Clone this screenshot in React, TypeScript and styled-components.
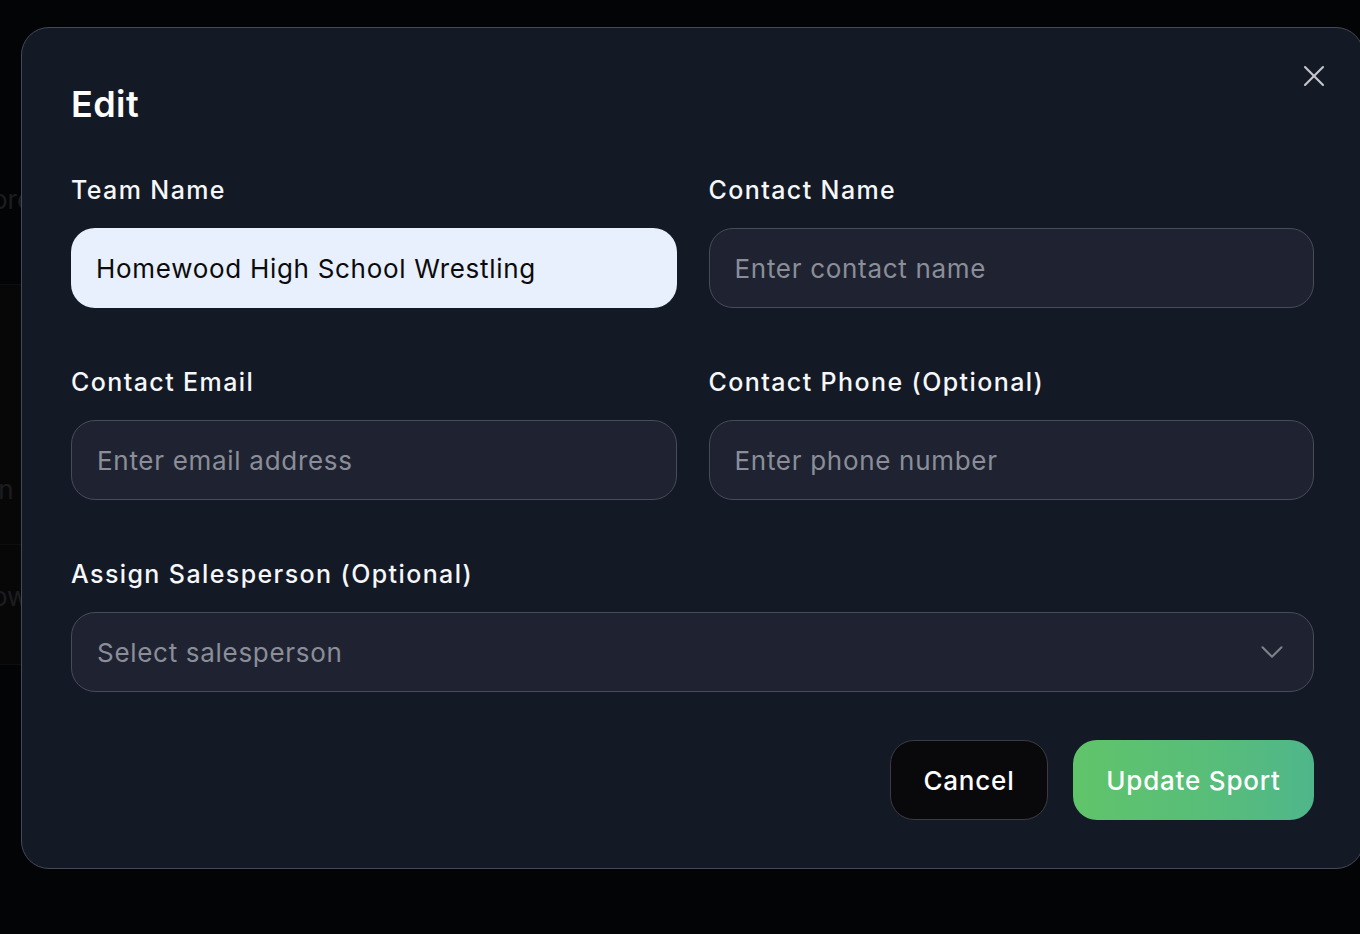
import React from "react";
import styled, { createGlobalStyle } from "styled-components";

const Global = createGlobalStyle`
  html, body {
    margin: 0;
    padding: 0;
    width: 100%;
    height: 100%;
    overflow: hidden;
    background: #06070a;
    font-family: Inter, "Noto Sans", "Liberation Sans", sans-serif;
  }
  * { box-sizing: border-box; }
`;

const Page = styled.div`
  position: relative;
  width: 1360px;
  height: 934px;
  overflow: hidden;
  background: #06070a;
`;

const Backdrop = styled.div`
  display: flex;
  flex-direction: column;
  color: #2c2d31;
  font-size: 26px;
  line-height: 30px;
`;

const BackRow = styled.div<{ $h: number; $pad: number; $bg?: string; $line?: boolean }>`
  height: ${(p) => p.$h}px;
  padding-top: ${(p) => p.$pad}px;
  background: ${(p) => p.$bg || "transparent"};
  border-bottom: ${(p) => (p.$line ? "1px solid #151619" : "none")};
  margin-left: -8px;
`;

const Overlay = styled.div`
  position: absolute;
  inset: 0;
  background: rgba(0, 0, 0, 0.35);
`;

const Dialog = styled.div`
  position: absolute;
  left: 21px;
  top: 27px;
  width: 1343px;
  background: #141926;
  border: 1.5px solid #454957;
  border-radius: 28px;
  padding: 54px 49px 48px 49px;
  color: #f4f5f7;
`;

const Title = styled.h2`
  margin: 0 0 49px 0;
  font-size: 36px;
  line-height: 44px;
  font-weight: 600;
  letter-spacing: 0.4px;
  color: #ffffff;
`;

const CloseButton = styled.button`
  position: absolute;
  top: 30px;
  right: 31px;
  width: 36px;
  height: 36px;
  padding: 0;
  border: none;
  background: transparent;
  color: #c4c6cc;
  display: flex;
  align-items: center;
  justify-content: center;
  cursor: pointer;
`;

const Grid = styled.div`
  display: grid;
  grid-template-columns: 1fr 1fr;
  column-gap: 32px;
  row-gap: 59px;
`;

const Field = styled.div<{ $full?: boolean }>`
  display: flex;
  flex-direction: column;
  gap: 23px;
  grid-column: ${(p) => (p.$full ? "1 / -1" : "auto")};
`;

const Label = styled.label`
  font-size: 25px;
  line-height: 30px;
  font-weight: 500;
  letter-spacing: 1.4px;
  color: #f6f7f9;
`;

const Input = styled.div<{ $filled?: boolean }>`
  height: 80px;
  border-radius: 24px;
  display: flex;
  align-items: center;
  justify-content: space-between;
  padding: 0 22px 0 25px;
  font-size: 26px;
  font-weight: 400;
  letter-spacing: 0.7px;
  background: ${(p) => (p.$filled ? "#e8effd" : "#1f2331")};
  border: ${(p) => (p.$filled ? "none" : "1.5px solid #484c59")};
  color: ${(p) => (p.$filled ? "#0b0b0c" : "#8b8e98")};
`;

const Chevron = styled.svg`
  width: 38px;
  height: 38px;
  color: #7d818c;
`;

const Actions = styled.div`
  display: flex;
  justify-content: flex-end;
  gap: 25px;
  margin-top: 48px;
`;

const Button = styled.button<{ $primary?: boolean }>`
  height: 80px;
  border-radius: 24px;
  padding: 0 28px;
  font-family: inherit;
  font-size: 26px;
  font-weight: 500;
  letter-spacing: 0.8px;
  color: #ffffff;
  cursor: pointer;
  background: ${(p) =>
    p.$primary
      ? "linear-gradient(90deg, #60c46a 0%, #57bd7a 60%, #4fb68b 100%)"
      : "#09090b"};
  border: ${(p) => (p.$primary ? "none" : "1.5px solid #3b3c40")};
  min-width: ${(p) => (p.$primary ? "241px" : "158px")};
`;

export default function App() {
  return (
    <Page>
      <Global />
      <Backdrop>
        <BackRow $h={285} $pad={185} $line>
          ore
        </BackRow>
        <BackRow $h={260} $pad={190} $bg="#0b0b0d" $line>
          in
        </BackRow>
        <BackRow $h={120} $pad={37} $bg="#0b0b0d" $line>
          ow
        </BackRow>
      </Backdrop>
      <Overlay />
      <Dialog role="dialog">
        <CloseButton aria-label="Close">
          <svg width="36" height="36" viewBox="0 0 24 24" fill="none" stroke="currentColor" strokeWidth="1.4" strokeLinecap="round">
            <path d="M18 6 6 18" />
            <path d="m6 6 12 12" />
          </svg>
        </CloseButton>
        <Title>Edit</Title>
        <Grid>
          <Field>
            <Label>Team Name</Label>
            <Input $filled>Homewood High School Wrestling</Input>
          </Field>
          <Field>
            <Label>Contact Name</Label>
            <Input>Enter contact name</Input>
          </Field>
          <Field>
            <Label>Contact Email</Label>
            <Input>Enter email address</Input>
          </Field>
          <Field>
            <Label>Contact Phone (Optional)</Label>
            <Input>Enter phone number</Input>
          </Field>
          <Field $full>
            <Label>Assign Salesperson (Optional)</Label>
            <Input>
              <span>Select salesperson</span>
              <Chevron viewBox="0 0 24 24" fill="none" stroke="currentColor" strokeWidth="1.3" strokeLinecap="round" strokeLinejoin="round">
                <path d="m6 9 6 6 6-6" />
              </Chevron>
            </Input>
          </Field>
        </Grid>
        <Actions>
          <Button>Cancel</Button>
          <Button $primary>Update Sport</Button>
        </Actions>
      </Dialog>
    </Page>
  );
}
